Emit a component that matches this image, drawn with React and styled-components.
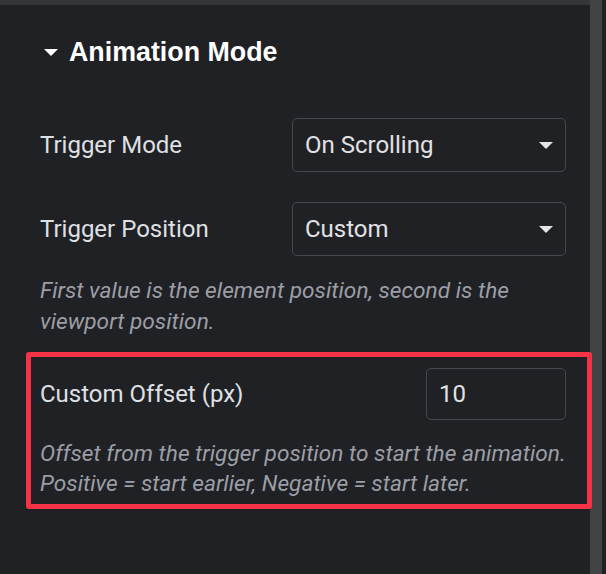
import React from "react"
import styled, { createGlobalStyle } from "styled-components"

const GlobalStyle = createGlobalStyle`
  html, body {
    margin: 0;
    padding: 0;
    background: #202125;
  }
  * { box-sizing: border-box; }
`

const Frame = styled.div`
  display: flex;
  width: 606px;
  height: 574px;
  background: #202125;
  overflow: hidden;
`

const Panel = styled.div`
  flex: 1;
  min-width: 0;
  display: flex;
  flex-direction: column;
`

const TopBar = styled.div`
  height: 5px;
  background: #35363a;
`

const ScrollTrack = styled.div`
  width: 12px;
  margin-right: 4px;
  background: #424347;
`

const Section = styled.section`
  padding: 32px 24px 0 40px;
`

const Heading = styled.h2`
  display: flex;
  align-items: center;
  gap: 11px;
  margin: 0 0 0 4px;
  font-family: "Liberation Sans", Arial, sans-serif;
  font-weight: 700;
  font-size: 26.8px;
  line-height: 30px;
  color: #ffffff;
`

const Caret = styled.span`
  width: 0;
  height: 0;
  border-left: 7.5px solid transparent;
  border-right: 7.5px solid transparent;
  border-top: 7px solid ${({ color }) => color || "#ffffff"};
`

const Fields = styled.div`
  display: flex;
  flex-direction: column;
  gap: 30px;
  margin-top: 51px;
`

const Row = styled.div`
  display: grid;
  grid-template-columns: ${({ narrow }) => (narrow ? "1fr 140px" : "252px 1fr")};
  align-items: center;
`

const Label = styled.span`
  font-family: Roboto, "Noto Sans", sans-serif;
  font-size: 24px;
  color: #dfe0e3;
`

const Select = styled.div`
  display: flex;
  align-items: center;
  justify-content: space-between;
  height: 54px;
  padding: 0 12px 0 12px;
  border: 1px solid #45474c;
  border-radius: 5px;
  font-family: Roboto, "Noto Sans", sans-serif;
  font-size: 24px;
  color: #e1e2e5;
`

const NumberInput = styled.div`
  display: flex;
  align-items: center;
  height: 52px;
  padding: 0 12px;
  border: 1px solid #45474c;
  border-radius: 5px;
  font-family: Roboto, "Noto Sans", sans-serif;
  font-size: 24px;
  color: #e1e2e5;
`

const Help = styled.p`
  margin: ${({ top }) => top || 0}px 0 0;
  font-family: Roboto, "Noto Sans", sans-serif;
  font-style: italic;
  font-size: 22.7px;
  line-height: ${({ lh }) => lh || 31}px;
  color: #9b9ea5;
`

/* red annotation frame drawn over the panel edge */
const Highlight = styled.div`
  position: relative;
  z-index: 1;
  margin: 15px -26px 0 -14px;
  padding: 11px 21px 5px 9px;
  border: 5px solid #f43446;
  border-radius: 3px;
`

export default function App() {
  return (
    <>
      <GlobalStyle />
      <Frame>
        <Panel>
          <TopBar />
          <Section>
            <Heading>
              <Caret />
              Animation Mode
            </Heading>
            <Fields>
              <Row>
                <Label>Trigger Mode</Label>
                <Select>
                  On Scrolling
                  <Caret color="#e4e5e8" />
                </Select>
              </Row>
              <Row>
                <Label>Trigger Position</Label>
                <Select>
                  Custom
                  <Caret color="#e4e5e8" />
                </Select>
              </Row>
            </Fields>
            <Help top={19}>
              First value is the element position, second is the viewport position.
            </Help>
            <Highlight>
              <Row narrow>
                <Label>Custom Offset (px)</Label>
                <NumberInput>10</NumberInput>
              </Row>
              <Help top={19} lh={30}>
                Offset from the trigger position to start the animation. Positive = start
                earlier, Negative = start later.
              </Help>
            </Highlight>
          </Section>
        </Panel>
        <ScrollTrack />
      </Frame>
    </>
  )
}
